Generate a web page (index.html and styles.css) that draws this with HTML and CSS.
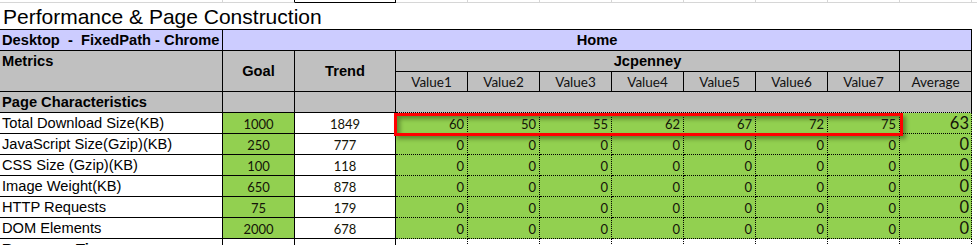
FILE: index.html
```html
<!DOCTYPE html>
<html lang="en">
<head>
<meta charset="utf-8">
<title>Performance &amp; Page Construction</title>
<link rel="stylesheet" href="styles.css">
</head>
<body>
<div class="sheet">
  <div class="strip">
    <span class="sc s-label"></span>
    <span class="sc s-goal"></span>
    <span class="sc s-trend"></span>
    <span class="sc s-val"></span>
    <span class="sc s-val"></span>
    <span class="sc s-val"></span>
    <span class="sc s-val"></span>
    <span class="sc s-val"></span>
    <span class="sc s-val"></span>
    <span class="sc s-val"></span>
    <span class="sc s-val"></span>
    <span class="sc s-rest"></span>
  </div>

  <div class="title">Performance &amp; Page Construction</div>

  <div class="grid">
    <!-- row 1 -->
    <div class="cell lav lbl b desk">Desktop  -  FixedPath - Chrome</div>
    <div class="cell lav ctr b span-all">Home</div>

    <!-- rows 2-3 -->
    <div class="cell gray lbl b top rows2">Metrics</div>
    <div class="cell gray ctr b rows2">Goal</div>
    <div class="cell gray ctr b rows2">Trend</div>
    <div class="cell gray ctr b span7">Jcpenney</div>
    <div class="cell gray"></div>

    <div class="cell gray ctr hdr">Value1</div>
    <div class="cell gray ctr hdr">Value2</div>
    <div class="cell gray ctr hdr">Value3</div>
    <div class="cell gray ctr hdr">Value4</div>
    <div class="cell gray ctr hdr">Value5</div>
    <div class="cell gray ctr hdr">Value6</div>
    <div class="cell gray ctr hdr">Value7</div>
    <div class="cell gray ctr hdr">Average</div>

    <!-- row 4 -->
    <div class="cell gray lbl b">Page Characteristics</div>
    <div class="cell gray"></div>
    <div class="cell gray"></div>
    <div class="cell gray span8 dot-bottom"></div>

    <!-- data rows -->
    <div class="cell lbl">Total Download Size(KB)</div>
    <div class="cell green ctr num">1000</div>
    <div class="cell ctr num">1849</div>
    <div class="cell green dot num rt">60</div>
    <div class="cell green dot num rt">50</div>
    <div class="cell green dot num rt">55</div>
    <div class="cell green dot num rt">62</div>
    <div class="cell green dot num rt">67</div>
    <div class="cell green dot num rt">72</div>
    <div class="cell green dot num rt">75</div>
    <div class="cell green dot avg rt">63</div>

    <div class="cell lbl">JavaScript Size(Gzip)(KB)</div>
    <div class="cell green ctr num">250</div>
    <div class="cell ctr num">777</div>
    <div class="cell green dot num rt">0</div>
    <div class="cell green dot num rt">0</div>
    <div class="cell green dot num rt">0</div>
    <div class="cell green dot num rt">0</div>
    <div class="cell green dot num rt">0</div>
    <div class="cell green dot num rt">0</div>
    <div class="cell green dot num rt">0</div>
    <div class="cell green dot avg rt">0</div>

    <div class="cell lbl">CSS Size (Gzip)(KB)</div>
    <div class="cell green ctr num">100</div>
    <div class="cell ctr num">118</div>
    <div class="cell green dot num rt">0</div>
    <div class="cell green dot num rt">0</div>
    <div class="cell green dot num rt">0</div>
    <div class="cell green dot num rt">0</div>
    <div class="cell green dot num rt">0</div>
    <div class="cell green dot num rt">0</div>
    <div class="cell green dot num rt">0</div>
    <div class="cell green dot avg rt">0</div>

    <div class="cell lbl">Image Weight(KB)</div>
    <div class="cell green ctr num">650</div>
    <div class="cell ctr num">878</div>
    <div class="cell green dot num rt">0</div>
    <div class="cell green dot num rt">0</div>
    <div class="cell green dot num rt">0</div>
    <div class="cell green dot num rt">0</div>
    <div class="cell green dot num rt">0</div>
    <div class="cell green dot num rt">0</div>
    <div class="cell green dot num rt">0</div>
    <div class="cell green dot avg rt">0</div>

    <div class="cell lbl">HTTP Requests</div>
    <div class="cell green ctr num">75</div>
    <div class="cell ctr num">179</div>
    <div class="cell green dot num rt">0</div>
    <div class="cell green dot num rt">0</div>
    <div class="cell green dot num rt">0</div>
    <div class="cell green dot num rt">0</div>
    <div class="cell green dot num rt">0</div>
    <div class="cell green dot num rt">0</div>
    <div class="cell green dot num rt">0</div>
    <div class="cell green dot avg rt">0</div>

    <div class="cell lbl">DOM Elements</div>
    <div class="cell green ctr num">2000</div>
    <div class="cell ctr num">678</div>
    <div class="cell green dot num rt">0</div>
    <div class="cell green dot num rt">0</div>
    <div class="cell green dot num rt">0</div>
    <div class="cell green dot num rt">0</div>
    <div class="cell green dot num rt">0</div>
    <div class="cell green dot num rt">0</div>
    <div class="cell green dot num rt">0</div>
    <div class="cell green dot avg rt">0</div>

    <!-- next section (cut off at the window edge) -->
    <div class="cell lbl b top">Response Time</div>
    <div class="cell"></div>
    <div class="cell"></div>
    <div class="cell dot"></div>
    <div class="cell dot"></div>
    <div class="cell dot"></div>
    <div class="cell dot"></div>
    <div class="cell dot"></div>
    <div class="cell dot"></div>
    <div class="cell dot"></div>
    <div class="cell dot"></div>

    <div class="highlight"></div>
  </div>
</div>
</body>
</html>
```

FILE: styles.css
```css
* {
  box-sizing: border-box;
  margin: 0;
  padding: 0;
}

body {
  margin: 0;
  background: #ffffff;
  color: #000000;
  font-family: "Liberation Sans", Arial, sans-serif;
}

.sheet {
  width: 977px;
  height: 245px;
  overflow: hidden;
}

/* previous spreadsheet row: gridlines only */
.strip {
  display: flex;
  height: 3px;
}

.sc {
  flex: none;
  height: 3px;
  border-right: 1px solid #d6d6d6;
  border-bottom: 1px solid #d6d6d6;
}

.s-label { width: 223px; }
.s-goal { width: 72px; border-right-color: #000000; }
.s-trend { width: 101px; border-right-color: #000000; border-bottom-color: #000000; }
.s-val { width: 72px; }
.s-rest { flex: 1; border-right: 0; }

.title {
  height: 26px;
  padding-left: 3px;
  font-size: 21px;
  line-height: 28px;
  white-space: nowrap;
}

/* the sheet */
.grid {
  position: relative;
  display: grid;
  grid-template-columns: 223px 72px 101px repeat(7, 72px) 72px;
  grid-template-rows: 21px 21px 20px repeat(8, 21px);
  width: 972px;
  border-top: 1px solid #000000;
}

.cell {
  display: flex;
  align-items: center;
  overflow: hidden;
  white-space: nowrap;
  font-size: 14.67px;
  border-right: 1px solid #000000;
  border-bottom: 1px solid #000000;
}

.lav { background: #ccccff; }
.gray { background: #c0c0c0; }
.green { background: #92d050; }

.b { font-weight: bold; }
.lbl { padding-left: 2px; }
.desk { white-space: pre; }
.ctr { justify-content: center; }
.rt { justify-content: flex-end; padding-right: 3px; }
.top { align-items: flex-start; padding-top: 2px; }

.span-all { grid-column: 2 / -1; }
.rows2 { grid-row: span 2; }
.span7 { grid-column: span 7; }
.span8 { grid-column: span 8; }

.hdr {
  font-family: Lato, "Open Sans", sans-serif;
  font-size: 13.5px;
  color: #111111;
  padding-top: 1px;
}

.num {
  font-family: Lato, "Open Sans", sans-serif;
  font-size: 13px;
  color: #141408;
  padding-top: 1px;
}

.avg {
  font-family: Lato, "Open Sans", sans-serif;
  font-size: 16.5px;
  color: #141408;
  padding-right: 2px;
}

.dot {
  border-right-style: dotted;
  border-bottom-style: dotted;
}

.dot-bottom { border-bottom-style: dotted; }

/* red outline drawn over the first data row */
.highlight {
  position: absolute;
  grid-row: 5 / 6;
  grid-column: 4 / 11;
  top: 0;
  left: -2px;
  right: -3px;
  bottom: -2px;
  border: 3px solid #ff0000;
  box-shadow: 3px 3px 4px rgba(30, 50, 10, 0.45), inset 3px 3px 4px rgba(30, 50, 10, 0.45);
  z-index: 2;
  pointer-events: none;
}
```
